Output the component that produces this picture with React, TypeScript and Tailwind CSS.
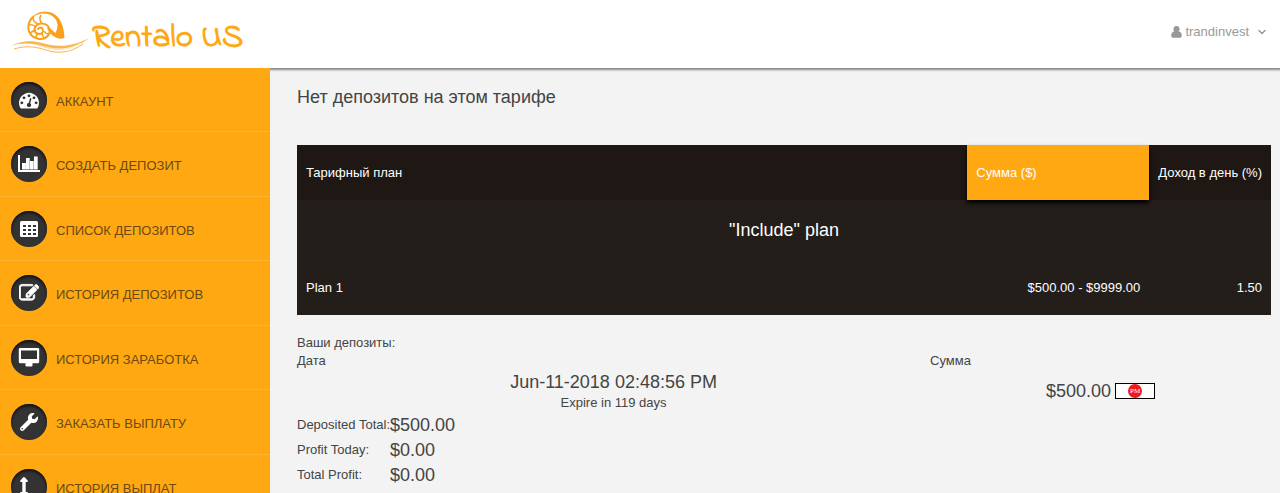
import React from "react";
import type { ReactNode } from "react";
import { FaWrench } from "react-icons/fa";
import { FiChevronDown } from "react-icons/fi";

const GaugeIcon = () => (
  <svg viewBox="0 0 1792 1792" className="size-5" fill="currentColor" aria-hidden="true">
    <path d="M384 1152q0-53-37.5-90.5t-90.5-37.5-90.5 37.5-37.5 90.5 37.5 90.5 90.5 37.5 90.5-37.5 37.5-90.5zm192-448q0-53-37.5-90.5t-90.5-37.5-90.5 37.5-37.5 90.5 37.5 90.5 90.5 37.5 90.5-37.5 37.5-90.5zm428 481l101-382q6-26-7.5-48.5t-38.5-29.5-48 6.5-30 39.5l-101 382q-60 5-107 43.5t-63 98.5q-20 77 20 146t117 89 146-20 89-117q16-60-6-117t-72-91zm660-33q0-53-37.5-90.5t-90.5-37.5-90.5 37.5-37.5 90.5 37.5 90.5 90.5 37.5 90.5-37.5 37.5-90.5zm-640-640q0-53-37.5-90.5t-90.5-37.5-90.5 37.5-37.5 90.5 37.5 90.5 90.5 37.5 90.5-37.5 37.5-90.5zm448 192q0-53-37.5-90.5t-90.5-37.5-90.5 37.5-37.5 90.5 37.5 90.5 90.5 37.5 90.5-37.5 37.5-90.5zm320 448q0 261-141 483-19 29-54 29h-1402q-35 0-54-29-141-221-141-483 0-182 71-348t191-286 286-191 348-71 348 71 286 191 191 286 71 348z" />
  </svg>
);

const ChartIcon = () => (
  <svg viewBox="0 0 22 20" className="h-5 w-[22px]" fill="currentColor" aria-hidden="true">
    <path d="M0 1h2v15h20v2H0zM4 9h3.900v6.500H4zM8 4h3.700v11.500H8zM12 7h3.700v8.500H12zM16 2.500h3.700v13H16z" />
  </svg>
);

const EditIcon = () => (
  <svg viewBox="0 0 1792 1792" className="size-5" fill="currentColor" stroke="currentColor" strokeWidth="80" aria-hidden="true">
    <path d="M888 1184l116-116-152-152-116 116v56h96v96h56zm520-126v190q0 119-84.5 203.500t-203.500 84.500h-832q-119 0-203.500-84.500t-84.500-203.500v-832q0-119 84.500-203.500t203.500-84.500h832q63 0 117 25 15 7 18 23 3 17-9 29l-49 49q-14 14-32 8-23-6-45-6h-832q-66 0-113 47t-47 113v832q0 66 47 113t113 47h832q66 0 113-47t47-113v-126q0-13 9-22l64-64q15-15 35-7t20 29zm-96-738l288 288-672 672h-288v-288zm444 132l-92 92-288-288 92-92q28-28 68-28t68 28l152 152q28 28 28 68t-28 68z" />
  </svg>
);

const TableIcon = () => (
  <svg viewBox="0 0 20 18" className="h-[18px] w-5" aria-hidden="true">
    <rect x="1" y="1" width="18" height="16" rx="1.500" fill="currentColor" />
    <path d="M4 5h3v2H4zm5 0h3v2H9zm5 0h3v2h-3zM4 9h3v2H4zm5 0h3v2H9zm5 0h3v2h-3zM4 13h3v2H4zm5 0h3v2H9zm5 0h3v2h-3z" fill="#333" />
  </svg>
);

const MonitorIcon = () => (
  <svg viewBox="0 0 22 20" className="h-5 w-[22px]" fill="currentColor" aria-hidden="true">
    <path fillRule="evenodd" d="M2 0h18a1.200 1.200 0 0 1 1.200 1.200v12.600a1.500 1.500 0 0 1-1.500 1.500H14.500v1q.5 2.200-1 2.200h-5q-1.500 0-1-2.200v-1H2.300a1.500 1.500 0 0 1-1.500-1.500V1.200A1.200 1.200 0 0 1 2 0zM3 2.500v8.500h16V2.500z" />
  </svg>
);

const ArrowsIcon = () => (
  <svg viewBox="0 0 20 20" className="size-5" fill="currentColor" aria-hidden="true">
    <path d="M5 0q.6 0 1 .5l2.800 3.200q.5 1.300-.8 1.300H6.700v10H8q1.300 0 .8 1.300L6 19.500q-1 1-2 0l-2.800-3.200Q.7 15 2 15h1.300V5H2Q.7 5 1.200 3.700L4 .5Q4.400 0 5 0z" />
  </svg>
);

const UserIcon = () => (
  <svg viewBox="0 0 11 12" className="h-3 w-[11px]" fill="currentColor" aria-hidden="true">
    <path d="M5.500 0a2.900 3.200 0 0 1 2.100 5.600Q10.800 5.800 10.800 9.800q0 1.900-1.700 1.900H1.900Q.2 11.700.2 9.800.2 5.800 3.400 5.600A2.900 3.200 0 0 1 5.500 0z" />
  </svg>
);

const ShellLogo = () => (
  <svg viewBox="0 0 80 46" className="h-[46px] w-20" fill="none" aria-hidden="true">
    <path
      d="M21 10C25 4 32 1 39 3c10 2 15 12 15.500 26q-5 2-9.500-1c-4-2-6-5-8-9l1.500-1 7 6C49 17 48 11 42 7c-6-4-15-3-21 3z"
      fill="#f9a11b"
    />
    <path
      d="M24 7c-7 6-7 14-3 19 4 4 10 5 14 3 4-2 6-6 4-10-2-5-10-6-13-2-3 3-1 8 3 8 4 0 5-4 3-6-2-1-4 0-4 2"
      stroke="#f9a11b"
      strokeWidth="2"
    />
    <path
      d="M19 16c3-1 5 0 7 2M23 8c0 4 2 6 5 7m3-9c-2 3-1 6 1 9M20 25c2-3 4-4 6-3m0 8c0-3 0-4 3-6m6 6c-2-2-3-3-3-6m7 1c-2 0-4-1-5-3"
      stroke="#f9a11b"
      strokeWidth="1.500"
    />
    <path d="M1 37c9-5 20-6 31-3s27 6 47-5c-17 14-34 13-46 9s-21-5-32-1z" fill="#fbb550" />
    <path d="M4 40c13-4 22-2 32 1 12 4 24 3 37-6" stroke="#fbb550" strokeWidth="1" />
    <path d="M4 37c12-3 21-2 31 1 13 3 24 3 36-4" stroke="#fff" strokeWidth="0.700" />
  </svg>
);

const menu: { label: string; icon: ReactNode }[] = [
  { label: "Аккаунт", icon: <GaugeIcon /> },
  { label: "Создать депозит", icon: <ChartIcon /> },
  { label: "Список депозитов", icon: <TableIcon /> },
  { label: "История депозитов", icon: <EditIcon /> },
  { label: "История заработка", icon: <MonitorIcon /> },
  { label: "Заказать выплату", icon: <FaWrench className="size-[18px]" /> },
  { label: "История выплат", icon: <ArrowsIcon /> },
];

const totals = [
  ["Deposited Total:", "$500.00"],
  ["Profit Today:", "$0.00"],
  ["Total Profit:", "$0.00"],
];

export default function App() {
  return (
    <div className="flex h-screen flex-col overflow-hidden bg-[#f3f3f3] font-['Liberation_Sans',Arial,sans-serif] text-[13px] text-[#444]">
      <header className="z-10 flex h-[68px] shrink-0 items-center justify-between bg-white pr-3 pl-[10px] shadow-[0_1px_2px_1px_#888]">
        <a href="#" className="flex items-center gap-[2px] text-[#ffa812]">
          <span className="pb-1">
            <ShellLogo />
          </span>
          <span className="pt-2 font-['Indie_Flower','Comic_Neue',cursive] text-[33px] leading-none font-bold">Rentalo US</span>
        </a>
        <button type="button" className="flex items-center gap-[3px] pb-1 text-[#999]">
          <UserIcon />
          <span>trandinvest</span>
          <FiChevronDown className="ml-1 size-3" strokeWidth={3} />
        </button>
      </header>
      <div className="flex min-h-0 flex-1">
        <nav className="z-20 w-[270px] shrink-0 overflow-hidden bg-[#ffa812]">
          <ul>
            {menu.map(({ label, icon }) => (
              <li key={label} className="h-16 border-b border-[#ffb52f] even:h-[65px]">
                <a href="#" className="flex h-full items-center gap-[9px] pl-[11px] text-[#6b4a14] uppercase">
                  <span className="flex size-9 items-center justify-center rounded-full bg-[#333] text-white shadow-[inset_0_2px_3px_#111]">
                    {icon}
                  </span>
                  <span className="pt-1">{label}</span>
                </a>
              </li>
            ))}
          </ul>
        </nav>
        <main className="min-w-0 flex-1 pt-[17px] pr-[9px] pl-[27px]">
          <h1 className="text-lg leading-6">Нет депозитов на этом тарифе</h1>
          <table className="mt-9 w-full bg-[#241e1a] text-white">
            <thead>
              <tr className="h-[55px] bg-[#1e1713] text-left">
                <th className="px-[9px] font-normal">Тарифный план</th>
                <th className="w-[182px] bg-[#ffa812] px-[9px] font-normal shadow-[0_3px_4px_#000]">Сумма ($)</th>
                <th className="w-[120px] px-[9px] font-normal whitespace-nowrap">Доход в день (%)</th>
              </tr>
            </thead>
            <tbody>
              <tr className="h-[60px]">
                <td colSpan={3} className="text-center text-lg">"Include" plan</td>
              </tr>
              <tr className="h-[55px]">
                <td className="px-[9px]">Plan 1</td>
                <td className="px-[9px] text-right">$500.00 - $9999.00</td>
                <td className="px-[9px] text-right">1.50</td>
              </tr>
            </tbody>
          </table>
          <p className="mt-[19px] leading-[18px]">Ваши депозиты:</p>
          <table className="w-full">
            <thead>
              <tr className="text-left leading-[18px]">
                <th className="w-[65%] font-normal">Дата</th>
                <th className="font-normal">Сумма</th>
              </tr>
            </thead>
            <tbody>
              <tr>
                <td className="text-center">
                  <div className="text-lg leading-6">Jun-11-2018 02:48:56 PM</div>
                  <div className="leading-[18px]">Expire in 119 days</div>
                </td>
                <td className="text-center">
                  <div className="flex items-center justify-center gap-1">
                    <span className="text-lg leading-6">$500.00</span>
                    <span className="flex h-4 w-10 items-center justify-center border border-black bg-white">
                      <span className="flex size-[14px] items-center justify-center rounded-full bg-[#ee1c1c] font-['Liberation_Serif',serif] text-[7px] leading-none text-white">PM</span>
                    </span>
                  </div>
                </td>
              </tr>
            </tbody>
          </table>
          <table>
            <tbody>
              {totals.map(([label, value]) => (
                <tr key={label} className="h-[25px]">
                  <th scope="row" className="w-[92px] text-left font-normal whitespace-nowrap">{label}</th>
                  <td className="text-lg leading-6">{value}</td>
                </tr>
              ))}
            </tbody>
          </table>
        </main>
      </div>
    </div>
  );
}
